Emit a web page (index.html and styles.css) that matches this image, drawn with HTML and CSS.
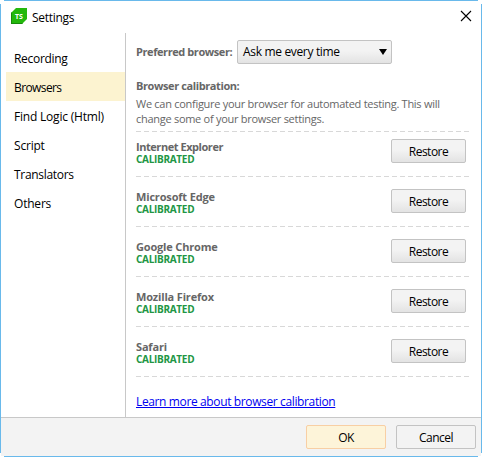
FILE: index.html
```html
<!DOCTYPE html>
<html lang="en">
<head>
<meta charset="utf-8">
<title>Settings</title>
<link rel="stylesheet" href="styles.css">
</head>
<body>
<div class="window">
  <header class="titlebar">
    <svg class="logo" width="16" height="16" viewBox="0 0 16 16">
      <path d="M0 5 5 0H16V11L11 16H0Z" fill="#23b80c"/>
      <path d="M0 5 1 4V15H12L11 16H0Z" fill="#168a0a"/>
      <text x="8" y="11" text-anchor="middle" class="logo-text">TS</text>
    </svg>
    <h1 class="title">Settings</h1>
    <svg class="close" width="12" height="12" viewBox="0 0 12 12"><path d="M1 1 11 11M11 1 1 11" stroke="#000" stroke-width="1.1"/></svg>
  </header>
  <div class="body">
    <nav class="nav">
      <a class="nav-item tight">Recording</a>
      <a class="nav-item active">Browsers</a>
      <a class="nav-item">Find Logic (Html)</a>
      <a class="nav-item">Script</a>
      <a class="nav-item tight">Translators</a>
      <a class="nav-item">Others</a>
    </nav>
    <main class="content">
      <div class="preferred">
        <span class="label">Preferred browser:</span>
        <div class="select"><span>Ask me every time</span><svg width="8" height="6" viewBox="0 0 8 6"><path d="M0 0H8L4 6Z"/></svg></div>
      </div>
      <h2 class="heading">Browser calibration:</h2>
      <p class="desc">We can configure your browser for automated testing. This will<br>change some of your browser settings.</p>
      <ul class="list">
        <li class="row first"><div><div class="name ie">Internet Explorer</div><div class="status">CALIBRATED</div></div><button class="btn restore">Restore</button></li>
        <li class="row"><div><div class="name">Microsoft Edge</div><div class="status">CALIBRATED</div></div><button class="btn restore">Restore</button></li>
        <li class="row"><div><div class="name">Google Chrome</div><div class="status">CALIBRATED</div></div><button class="btn restore">Restore</button></li>
        <li class="row"><div><div class="name">Mozilla Firefox</div><div class="status">CALIBRATED</div></div><button class="btn restore">Restore</button></li>
        <li class="row"><div><div class="name">Safari</div><div class="status">CALIBRATED</div></div><button class="btn restore">Restore</button></li>
      </ul>
      <a class="link">Learn more about browser calibration</a>
    </main>
  </div>
  <footer class="footer">
    <button class="btn ok">OK</button>
    <button class="btn cancel">Cancel</button>
  </footer>
</div>
</body>
</html>
```

FILE: styles.css
```css
* { box-sizing: border-box; margin: 0; padding: 0; }
body { width: 482px; height: 457px; overflow: hidden; background: #fff; font: 12px/16px "Open Sans", "Noto Sans", sans-serif; color: #000; }
.window {
  width: 482px; height: 457px; padding: 1px; display: flex; flex-direction: column;
  background:
    linear-gradient(#69b9eb, #69b9eb) 4px 0 / 474px 1px no-repeat,
    linear-gradient(#69b9eb, #69b9eb) 4px 456px / 474px 1px no-repeat,
    linear-gradient(#69b9eb, #69b9eb) 0 4px / 1px 449px no-repeat,
    linear-gradient(#69b9eb, #69b9eb) 481px 4px / 1px 449px no-repeat,
    #fff;
}
.titlebar { height: 32px; flex: none; display: flex; align-items: flex-start; padding: 7px 9px 0 10px; }
.logo { flex: none; }
.logo-text { font: bold 7px "Open Sans", sans-serif; fill: #fff; }
.title { font-size: 12px; font-weight: 400; margin-left: 5px; line-height: 20px; letter-spacing: -0.3px; }
.close { margin: 2px 0 0 auto; }
.body { height: 384px; flex: none; display: flex; }
.nav { width: 125px; flex: none; border-right: 1px solid #c8c8c8; padding: 10px 0 0 5px; }
.nav-item { display: block; height: 29px; line-height: 31px; padding-left: 8px; letter-spacing: -0.2px; white-space: nowrap; }
.tight { letter-spacing: -0.3px; }
.active { background: #fcf3d0; letter-spacing: -0.6px; }
.content { flex: 1; padding: 7px 0 0 10px; white-space: nowrap; }
.preferred { display: flex; align-items: center; height: 24px; }
.label, .heading, .name { font-size: 11px; font-weight: 700; color: #666; letter-spacing: -0.17px; }
.label { width: 101px; letter-spacing: -0.42px; }
.select { width: 155px; height: 24px; display: flex; align-items: center; justify-content: space-between; padding: 0 4px 0 5px; border: 1px solid #c3c3c3; border-radius: 2px; background: linear-gradient(#f3f3f3 45%, #e3e3e3); letter-spacing: -0.33px; }
.heading { margin-top: 14px; line-height: 16px; letter-spacing: -0.4px; }
.desc { margin-top: 2px; font-size: 11px; line-height: 15px; color: #666; letter-spacing: -0.28px; height: 35px; }
.list { list-style: none; width: 333px; }
.row { height: 50px; display: flex; justify-content: space-between; padding: 12px 3px 0 0; background: repeating-linear-gradient(90deg, #d8d8d8 0 5px, transparent 5px 8px) 0 100% / 100% 1px no-repeat; }
.first { height: 46px; padding-top: 8px;
  background: repeating-linear-gradient(90deg, #d8d8d8 0 5px, transparent 5px 8px) 0 0 / 100% 1px no-repeat, repeating-linear-gradient(90deg, #d8d8d8 0 5px, transparent 5px 8px) 0 100% / 100% 1px no-repeat; }
.name { line-height: 15px; }
.ie { letter-spacing: -0.45px; }
.status { font-size: 10px; line-height: 11px; font-weight: 700; color: #219644; letter-spacing: -0.3px; }
.btn { height: 24px; border: 1px solid #c3c3c3; border-radius: 2px; background: linear-gradient(#f3f3f3 45%, #e3e3e3); font: 12px/22px "Open Sans", sans-serif; letter-spacing: -0.5px; color: #000; padding-top: 1px; }
.restore { width: 75px; }
.link { display: inline-block; margin-top: 17px; color: #0000f0; text-decoration: underline; letter-spacing: -0.37px; }
.footer { height: 39px; flex: none; border-top: 1px solid #c8c8c8; background: #f3f3f3; display: flex; justify-content: flex-end; gap: 10px; padding: 7px 5px 0 0; }
.ok, .cancel { width: 80px; background: #f3f3f3; }
.ok { background: #fdf4d9; border-color: #f8cfa4; }
```
